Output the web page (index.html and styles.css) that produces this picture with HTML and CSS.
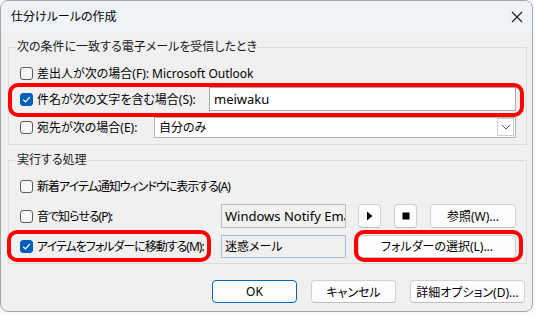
FILE: index.html
```html
<!DOCTYPE html>
<html lang="ja">
<head>
    <meta charset="UTF-8">
    <title>仕分けルールの作成</title>
    <link rel="stylesheet" href="styles.css">
</head>
<body>
    <div class="dialog">
        <div class="titlebar">
            <span class="title">仕分けルールの作成</span>
            <svg class="close" width="12" height="12" viewBox="0 0 12 12">
                <path d="M1 1 L11 11 M11 1 L1 11" stroke="#1b1b1b" stroke-width="1.1" fill="none"/>
            </svg>
        </div>

        <fieldset class="group cond">
            <legend>次の条件に一致する電子メールを受信したとき</legend>
            <div class="row">
                <label class="check"><span class="cb"></span>差出人が次の場合(F): Microsoft Outlook</label>
            </div>
            <div class="row mark mark-subject">
                <label class="check grow"><span class="cb on"><svg width="9" height="9" viewBox="0 0 9 9"><path d="M1.2 4.8 L3.5 7 L7.9 2" stroke="#fff" stroke-width="1.2" fill="none"/></svg></span>件名が次の文字を含む場合(S):</label>
                <div class="textbox subject">meiwaku</div>
            </div>
            <div class="row row-to">
                <label class="check grow"><span class="cb"></span>宛先が次の場合(E):</label>
                <div class="combo">
                    <span>自分のみ</span>
                    <span class="drop"><svg width="10" height="6" viewBox="0 0 10 6"><path d="M1 1 L5 5 L9 1" stroke="#5a5a5a" stroke-width="1" fill="none"/></svg></span>
                </div>
            </div>
        </fieldset>

        <fieldset class="group action">
            <legend>実行する処理</legend>
            <div class="row">
                <label class="check tight"><span class="cb"></span>新着アイテム通知ウィンドウに表示する(A)</label>
            </div>
            <div class="row row-gap">
                <label class="check grow tight"><span class="cb"></span>音で知らせる(P):</label>
                <div class="textbox readonly">Windows Notify Email</div>
                <div class="side">
                    <button class="btn icon"><svg width="7" height="10" viewBox="0 0 7 10"><path d="M1 0.5 L6.5 5 L1 9.5 Z" fill="#000"/></svg></button>
                    <button class="btn icon"><svg width="8" height="8" viewBox="0 0 8 8"><rect x="0.5" y="0.5" width="7" height="7" fill="#000"/></svg></button>
                    <button class="btn browse">参照(W)...</button>
                </div>
            </div>
            <div class="row row-gap">
                <label class="check grow tight mark mark-move"><span class="cb on"><svg width="9" height="9" viewBox="0 0 9 9"><path d="M1.2 4.8 L3.5 7 L7.9 2" stroke="#fff" stroke-width="1.2" fill="none"/></svg></span>アイテムをフォルダーに移動する(M):</label>
                <div class="textbox folder">迷惑メール</div>
                <div class="side">
                    <button class="btn wide mark mark-folder">フォルダーの選択(L)...</button>
                </div>
            </div>
        </fieldset>

        <div class="footer">
            <button class="btn default">OK</button>
            <button class="btn">キャンセル</button>
            <button class="btn more">詳細オプション(D)...</button>
        </div>
    </div>
</body>
</html>
```

FILE: styles.css
```css
body {
    margin: 0;
    background: #fbfbfb;
    font-family: "Noto Sans", "Noto Sans CJK JP", sans-serif;
    font-size: 12px;
    font-feature-settings: "palt";
    color: #000;
}

.dialog {
    width: 531px;
    height: 310px;
    border: 1px solid #a4a4a4;
    border-radius: 8px;
    overflow: hidden;
    background: #f0f0f0;
}

/* Titelleiste */
.titlebar {
    height: 31px;
    background: #eef3f8;
    display: flex;
    align-items: center;
    justify-content: space-between;
    padding: 0 9px 0 10px;
}

.title {
    line-height: 16px;
}

.close {
    display: block;
}

/* Gruppenrahmen */
.group {
    margin: 7px 5px 0 7px;
    padding: 5px 10px 4px 11px;
    border: 1px solid #dcdcdc;
    min-width: 0;
}

.group legend {
    padding: 0 1px;
    margin-left: -4px;
    line-height: 16px;
    color: #1a1a1a;
}

.row {
    display: flex;
    align-items: center;
    height: 26px;
    position: relative;
}

.row-to {
    margin-top: 2px;
}

.row-gap {
    margin-top: 4px;
}

.check {
    display: flex;
    align-items: center;
    white-space: nowrap;
    position: relative;
    align-self: stretch;
}

.check.tight {
    letter-spacing: -1px;
}

.grow {
    flex: 1;
}

.cb {
    width: 11px;
    height: 11px;
    border: 1px solid #5c5c5c;
    border-radius: 3px;
    background: #f7f7f7;
    margin-right: 4px;
    display: flex;
    align-items: center;
    justify-content: center;
    flex-shrink: 0;
}

.cb.on {
    background: #005fb8;
    border-color: #005fb8;
}

.cb svg {
    display: block;
}

/* Eingabefelder */
.textbox {
    box-sizing: border-box;
    height: 24px;
    border: 1px solid #a9a9a9;
    background: #fff;
    padding: 0 4px;
    line-height: 22px;
    white-space: nowrap;
    overflow: hidden;
}

.textbox.subject {
    width: 307px;
    font-size: 13px;
}

.textbox.readonly {
    width: 125px;
    background: #f2f2f2;
    border-color: #bdbdbd;
    padding-left: 3px;
    font-size: 13px;
}

.textbox.folder {
    width: 125px;
    height: 23px;
    background: #f0f0f0;
    border-color: #a9bcd1;
    padding-left: 3px;
}

.combo {
    box-sizing: border-box;
    width: 362px;
    height: 21px;
    border: 1px solid #b4b4b4;
    background: #fff;
    display: flex;
    align-items: center;
    justify-content: space-between;
    padding: 0 1px 0 4px;
}

.drop {
    width: 15px;
    height: 16px;
    border: 1px solid #cfcfcf;
    display: flex;
    align-items: center;
    justify-content: center;
}

.drop svg {
    display: block;
}

.side {
    width: 158px;
    margin-left: 12px;
    display: flex;
    gap: 13px;
}

/* Schaltflaechen */
.btn {
    box-sizing: border-box;
    height: 23px;
    background: #fdfdfd;
    border: 1px solid #d0d0d0;
    border-bottom-color: #bdbdbd;
    border-radius: 4px;
    font: inherit;
    color: #000;
    padding: 0;
    display: flex;
    align-items: center;
    justify-content: center;
    position: relative;
}

.btn.icon {
    width: 23px;
    height: 24px;
}

.btn.browse {
    width: 86px;
    height: 24px;
}

.btn.wide {
    width: 158px;
}

.footer {
    display: flex;
    justify-content: flex-end;
    gap: 14px;
    margin-top: 16px;
    padding-right: 7px;
}

.footer .btn {
    width: 85px;
}

.footer .btn.more {
    width: 115px;
}

.btn.default {
    border: 1px solid #0067c0;
}

/* rote Markierungen */
.mark::after {
    content: '';
    position: absolute;
    border: 4px solid #f00;
    border-radius: 10px;
    pointer-events: none;
}

.mark-subject::after {
    inset: -3px -8px -5px -12px;
}

.mark-move::after {
    inset: -3px 10px -3px -13px;
}

.mark-folder::after {
    inset: -6px -8px -5px -5px;
}
```
